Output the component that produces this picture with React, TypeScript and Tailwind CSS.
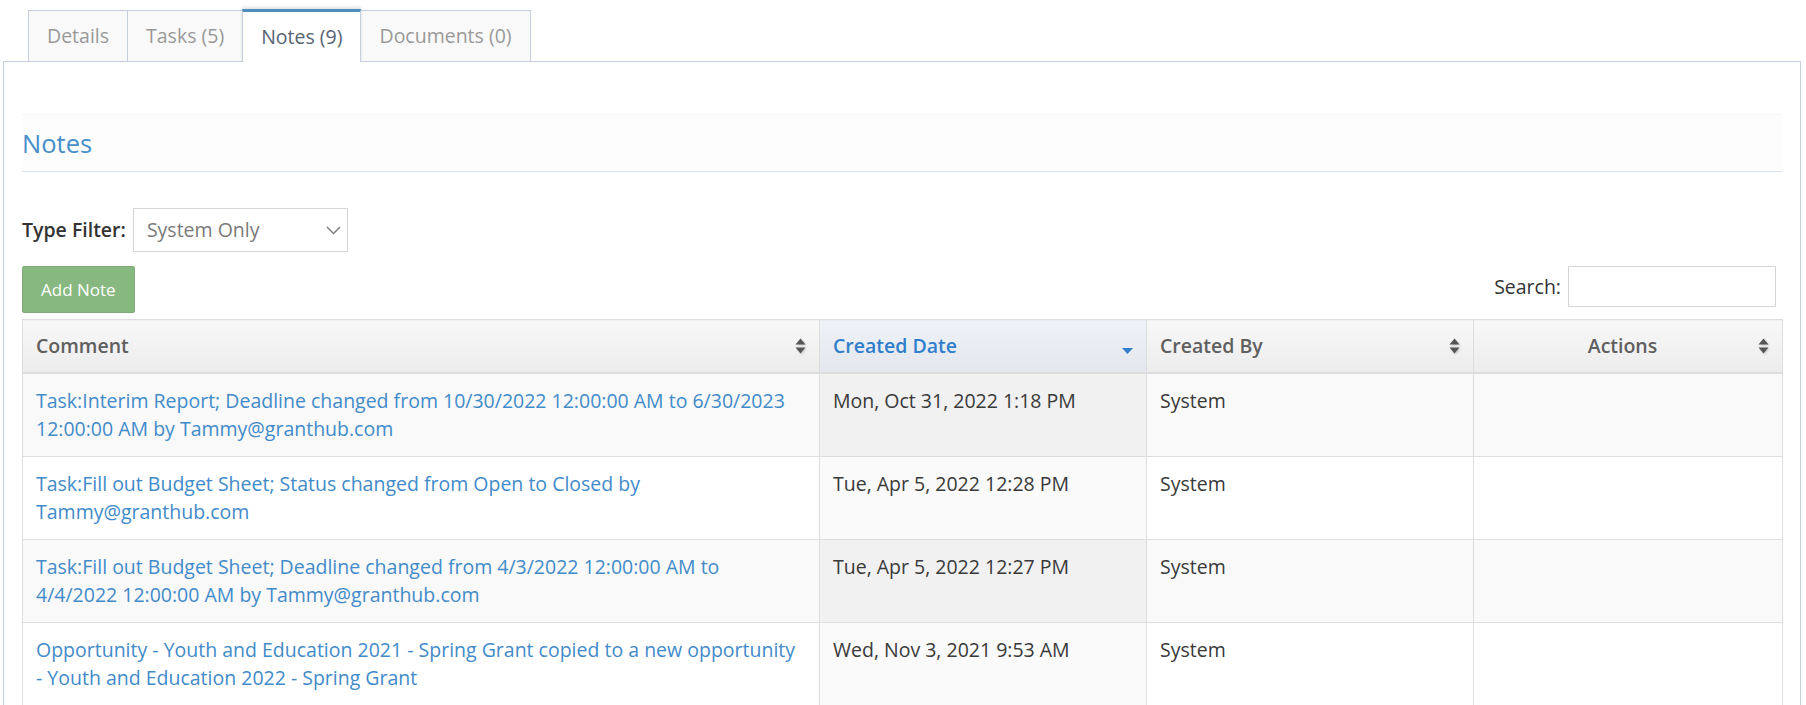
import React from "react";

const SortBoth = () => (
  <svg width="11" height="16" viewBox="0 0 11 16" className="shrink-0 drop-shadow-[1px_1px_1px_rgba(0,0,0,0.18)]">
    <path d="M5.5 0.5 L10.5 6.5 L0.5 6.5 Z" fill="#555" />
    <path d="M0.5 9.5 L10.5 9.5 L5.5 15.5 Z" fill="#555" />
  </svg>
);

const SortDesc = () => (
  <svg width="11" height="16" viewBox="0 0 11 16" className="shrink-0">
    <path d="M0 10 L11 10 L5.5 16 Z" fill="#307ecc" />
  </svg>
);

const Chevron = () => (
  <svg width="15" height="9" viewBox="0 0 15 9" className="shrink-0">
    <path d="M1 1 L7.5 7.5 L14 1" fill="none" stroke="#808080" strokeWidth="1.5" />
  </svg>
);

type Row = { comment: React.ReactNode; date: string; by: string };

const rows: Row[] = [
  {
    comment: (
      <>
        Task:Interim Report; Deadline changed from 10/30/2022 12:00:00 AM to 6/30/2023
        <br />
        12:00:00 AM by Tammy@granthub.com
      </>
    ),
    date: "Mon, Oct 31, 2022 1:18 PM",
    by: "System",
  },
  {
    comment: (
      <>
        Task:Fill out Budget Sheet; Status changed from Open to Closed by
        <br />
        Tammy@granthub.com
      </>
    ),
    date: "Tue, Apr 5, 2022 12:28 PM",
    by: "System",
  },
  {
    comment: (
      <>
        Task:Fill out Budget Sheet; Deadline changed from 4/3/2022 12:00:00 AM to
        <br />
        4/4/2022 12:00:00 AM by Tammy@granthub.com
      </>
    ),
    date: "Tue, Apr 5, 2022 12:27 PM",
    by: "System",
  },
  {
    comment: (
      <>
        Opportunity - Youth and Education 2021 - Spring Grant copied to a new opportunity
        <br />
        - Youth and Education 2022 - Spring Grant
      </>
    ),
    date: "Wed, Nov 3, 2021 9:53 AM",
    by: "System",
  },
];

export default function App() {
  return (
    <div className="w-[1806px] h-[705px] overflow-hidden bg-white font-['Open_Sans',_'Liberation_Sans',_sans-serif] text-[19.5px] leading-[28px] text-[#393939]">
      {/* Tabs */}
      <div className="flex items-end h-[61px] pt-[9px] pl-[28px]">
        <div className="h-[51px] px-[18px] flex items-center border border-b-0 border-[#c5d0dc] bg-[#f9f9f9] text-[#999] -mr-px">
          Details
        </div>
        <div className="h-[51px] px-[18px] flex items-center border border-b-0 border-[#c5d0dc] bg-[#f9f9f9] text-[#999] -mr-px">
          Tasks (5)
        </div>
        <div className="relative z-10 h-[53px] -mb-px px-[18px] flex items-center border border-b-0 border-t-[3px] border-[#c5d0dc] border-t-[#4c8fbd] bg-white text-[#576373] -mr-px shadow-[0_-2px_3px_0_rgba(0,0,0,0.12)]">
          Notes (9)
        </div>
        <div className="h-[51px] px-[18px] flex items-center border border-b-0 border-[#c5d0dc] bg-[#f9f9f9] text-[#999]">
          Documents (0)
        </div>
      </div>

      {/* Panel */}
      <div className="ml-[3px] w-[1798px] h-[700px] border border-b-0 border-[#c5d0dc] px-[18px] pt-[52px]">
        <div className="h-[58px] flex items-center bg-[#fdfdfd] border-t border-t-[#f6f6f6] border-b border-b-[#d9e2ea]">
          <h4 className="text-[25.5px] leading-[32px] text-[#478fca] font-medium">Notes</h4>
        </div>

        <div className="mt-[36px] flex items-center h-[44px]">
          <span className="font-semibold text-[#333]">Type Filter:</span>
          <div className="ml-[7px] w-[215px] h-[44px] border border-[#d5d5d5] flex items-center justify-between pl-[13px] pr-[6px] text-[#7a7a7a]">
            <span>System Only</span>
            <Chevron />
          </div>
        </div>

        <div className="mt-[14px] flex items-start justify-between">
          <button className="h-[47px] px-[18px] bg-[#87b87f] border border-[#7fab77] rounded-[2px] text-white text-[17px] leading-[24px]">
            Add Note
          </button>
          <div className="flex items-center h-[41px] mr-[6px]">
            <span className="text-[#333]">Search:</span>
            <div className="ml-[7px] w-[208px] h-[41px] border border-[#d5d5d5] bg-white" />
          </div>
        </div>

        <table className="mt-[6px] table-fixed border-collapse w-[1760px] border border-[#ddd]">
          <colgroup>
            <col className="w-[797px]" />
            <col className="w-[327px]" />
            <col className="w-[327px]" />
            <col className="w-[309px]" />
          </colgroup>
          <thead>
            <tr>
              <th className="font-semibold text-left text-[#5f5f5f] px-[13px] py-[12px] border border-[#ddd] border-b-2 bg-gradient-to-b from-[#f8f8f8] to-[#ececec]">
                <div className="flex items-center justify-between">
                  <span>Comment</span>
                  <SortBoth />
                </div>
              </th>
              <th className="font-semibold text-left text-[#307ecc] px-[13px] py-[12px] border border-[#ddd] border-b-2 bg-gradient-to-b from-[#eff3f8] to-[#e3e7ed]">
                <div className="flex items-center justify-between">
                  <span>Created Date</span>
                  <SortDesc />
                </div>
              </th>
              <th className="font-semibold text-left text-[#5f5f5f] px-[13px] py-[12px] border border-[#ddd] border-b-2 bg-gradient-to-b from-[#f8f8f8] to-[#ececec]">
                <div className="flex items-center justify-between">
                  <span>Created By</span>
                  <SortBoth />
                </div>
              </th>
              <th className="font-semibold text-[#5f5f5f] px-[13px] py-[12px] border border-[#ddd] border-b-2 bg-gradient-to-b from-[#f8f8f8] to-[#ececec]">
                <div className="flex items-center">
                  <span className="flex-1 text-center">Actions</span>
                  <SortBoth />
                </div>
              </th>
            </tr>
          </thead>
          <tbody>
            {rows.map((r, i) => {
              const odd = i % 2 === 0;
              return (
                <tr key={i} className={odd ? "bg-[#f9f9f9]" : "bg-white"}>
                  <td className="align-top px-[13px] py-[13px] border border-[#ddd] text-[#428bca] whitespace-nowrap">
                    {r.comment}
                  </td>
                  <td className={`align-top px-[13px] py-[13px] border border-[#ddd] ${odd ? "bg-[#f1f1f1]" : "bg-[#fafafa]"}`}>
                    {r.date}
                    <br />
                    <span className="invisible">.</span>
                  </td>
                  <td className="align-top px-[13px] py-[13px] border border-[#ddd]">{r.by}</td>
                  <td className="align-top px-[13px] py-[13px] border border-[#ddd]"></td>
                </tr>
              );
            })}
          </tbody>
        </table>
      </div>
    </div>
  );
}
